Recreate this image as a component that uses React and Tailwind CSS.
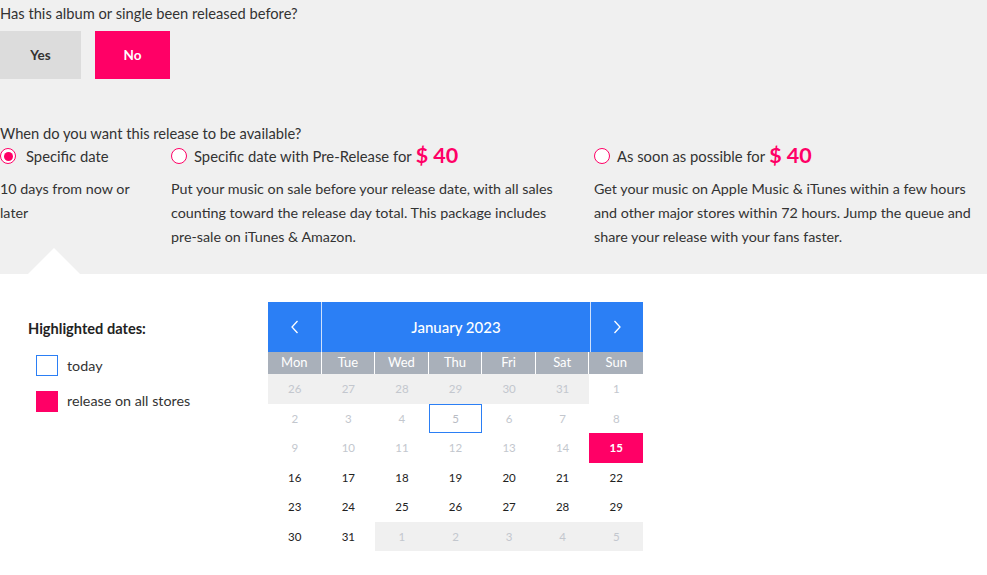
import { useState } from "react";

const PINK = "bg-[#ff0066]";

function Radio({ checked }) {
  return (
    <span className="flex h-[16px] w-[16px] shrink-0 items-center justify-center rounded-full border-[1.5px] border-[#ff0066] bg-white">
      {checked && <span className="h-[9px] w-[9px] rounded-full bg-[#ff0066]" />}
    </span>
  );
}

function Option({ checked, label, price, width, children }) {
  return (
    <div className={width}>
      <div className="flex h-[20px] items-center">
        <Radio checked={checked} />
        <span className={`${checked ? "ml-[10px]" : "ml-[7px]"} text-[14.8px] text-[#333]`}>{label}</span>
        {price && (
          <span className="ml-[4px] text-[21.5px] font-bold leading-none text-[#ff0066]">
            {price}
          </span>
        )}
      </div>
      <p className="mt-[11px] text-[14.3px] leading-[24px] text-[#333]">{children}</p>
    </div>
  );
}

const weekdays = ["Mon", "Tue", "Wed", "Thu", "Fri", "Sat", "Sun"];

// kind: prev (grey cell), off (past, light text), on (selectable), today, release
const days = [
  [26, "prev"], [27, "prev"], [28, "prev"], [29, "prev"], [30, "prev"], [31, "prev"], [1, "off"],
  [2, "off"], [3, "off"], [4, "off"], [5, "today"], [6, "off"], [7, "off"], [8, "off"],
  [9, "off"], [10, "off"], [11, "off"], [12, "off"], [13, "off"], [14, "off"], [15, "release"],
  [16, "on"], [17, "on"], [18, "on"], [19, "on"], [20, "on"], [21, "on"], [22, "on"],
  [23, "on"], [24, "on"], [25, "on"], [26, "on"], [27, "on"], [28, "on"], [29, "on"],
  [30, "on"], [31, "on"], [1, "prev"], [2, "prev"], [3, "prev"], [4, "prev"], [5, "prev"],
];

function dayClass(kind) {
  if (kind === "prev") return "bg-[#f0f0f0] text-[#c3c7ce]";
  if (kind === "off") return "text-[#c3c7ce]";
  if (kind === "today") return "text-[#b8bcc4] border border-[#2b7ff5]";
  if (kind === "release") return "bg-[#ff0066] text-white font-bold";
  return "text-[#222]";
}

function Calendar() {
  return (
    <div className="w-[375px]">
      <div className="flex h-[50px] bg-[#2b7ff5] text-white">
        <button className="flex w-[54px] items-center justify-center border-r border-[#cfe0fb]">
          <svg width="10" height="14" viewBox="0 0 10 14" fill="none" stroke="white" strokeWidth="1.3">
            <path d="M7.5 1 L2 7 L7.5 13" />
          </svg>
        </button>
        <div className="flex flex-1 items-center justify-center text-[15px] font-medium">
          January 2023
        </div>
        <button className="flex w-[53px] items-center justify-center border-l border-[#cfe0fb]">
          <svg width="10" height="14" viewBox="0 0 10 14" fill="none" stroke="white" strokeWidth="1.3">
            <path d="M2.5 1 L8 7 L2.5 13" />
          </svg>
        </button>
      </div>
      <div className="grid h-[22px] grid-cols-7 bg-[#a9b0ba] text-[13px] text-white">
        {weekdays.map((d, i) => (
          <div
            key={d}
            className={`flex items-center justify-center ${i < 6 ? "border-r border-white" : ""}`}
          >
            {d}
          </div>
        ))}
      </div>
      <div className="grid grid-cols-7">
        {days.map(([n, kind], i) => (
          <div
            key={i}
            className={`flex h-[29.5px] items-center justify-center text-[11.5px] ${dayClass(kind)}`}
          >
            {n}
          </div>
        ))}
      </div>
    </div>
  );
}

export default function App() {
  const [released, setReleased] = useState(false);

  return (
    <div className="min-h-[575px] bg-white font-['Lato',sans-serif] text-[#333]">
      <div className="relative h-[274px] bg-[#f0f0f0] pt-[3px]">
        <p className="text-[14.7px] leading-[20px]">Has this album or single been released before?</p>

        <div className="mt-[8px] flex gap-[14px]">
          <button
            onClick={() => setReleased(true)}
            className={`h-[48px] w-[81px] text-[13.5px] font-bold ${released ? "bg-[#ff0066] text-white" : "bg-[#dcdcdc] text-[#333]"}`}
          >
            Yes
          </button>
          <button
            onClick={() => setReleased(false)}
            className={`h-[48px] w-[75px] text-[13.5px] font-bold ${!released ? `${PINK} text-white` : "bg-[#dcdcdc] text-[#333]"}`}
          >
            No
          </button>
        </div>

        <p className="mt-[44px] text-[14.7px] leading-[20px]">When do you want this release to be available?</p>

        <div className="mt-[3px] flex">
          <Option checked label="Specific date" width="w-[171px] pr-[30px]">
            10 days from now or later
          </Option>
          <Option label="Specific date with Pre-Release for" price="$ 40" width="w-[423px] pr-[30px]">
            Put your music on sale before your release date, with all sales counting toward the
            release day total. This package includes pre-sale on iTunes &amp; Amazon.
          </Option>
          <Option label="As soon as possible for" price="$ 40" width="flex-1 pr-[8px]">
            Get your music on Apple Music &amp; iTunes within a few hours and other major stores
            within 72 hours. Jump the queue and share your release with your fans faster.
          </Option>
        </div>

        <div className="absolute bottom-0 left-[28px] h-0 w-0 border-x-[26px] border-b-[26px] border-x-transparent border-b-white" />
      </div>

      <div className="flex pt-[28px]">
        <div className="w-[268px] pl-[28px] pt-[17px]">
          <p className="text-[14.6px] font-bold leading-[20px] text-[#222]">Highlighted dates:</p>
          <div className="mt-[16px] flex items-center pl-[8px]">
            <span className="h-[21px] w-[22px] border border-[#2b7ff5] bg-white" />
            <span className="ml-[9px] text-[14.3px]">today</span>
          </div>
          <div className="mt-[14px] flex items-center pl-[8px]">
            <span className="h-[21px] w-[22px] bg-[#ff0066]" />
            <span className="ml-[9px] text-[14.3px]">release on all stores</span>
          </div>
        </div>
        <Calendar />
      </div>
    </div>
  );
}
